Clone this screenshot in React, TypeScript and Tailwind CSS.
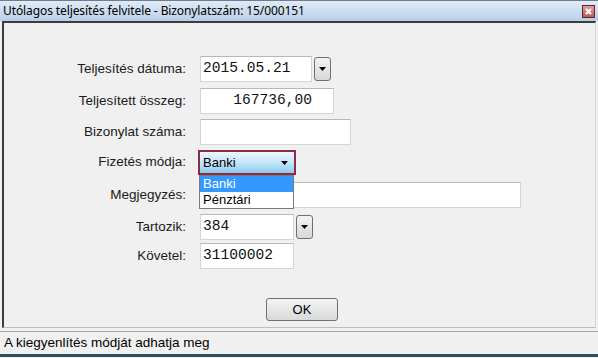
import React from 'react'

const sans = "font-['Liberation_Sans',Arial,sans-serif]"
const mono = "font-['Liberation_Mono','Courier_New',monospace]"

function Arrow() {
  return (
    <svg width="7" height="4" viewBox="0 0 7 4">
      <path d="M0 0h7L3.5 4z" fill="#000" />
    </svg>
  )
}

function DropButton() {
  return (
    <div className="ml-[2px] flex h-[24px] w-[17px] items-center justify-center rounded-[3px] border border-[#707070] bg-gradient-to-b from-[#f3f3f3] to-[#d8d8d8]">
      <Arrow />
    </div>
  )
}

function Field({ width, children, className = '' }: { width: string; children?: React.ReactNode; className?: string }) {
  return (
    <div
      className={`flex h-[26px] items-center border border-[#d5d5d5] border-t-[#b8b8b8] bg-white px-[2px] text-[14.6px] text-[#111] ${mono} ${width} ${className}`}
    >
      {children}
    </div>
  )
}

function Row({ label, top, children }: { label: string; top: string; children: React.ReactNode }) {
  return (
    <div className={`flex items-center ${top}`}>
      <div className={`w-[183px] pr-[1px] text-right text-[13.5px] text-[#1a1a1a] ${sans}`}>{label}</div>
      <div className="ml-[13px] flex items-center">{children}</div>
    </div>
  )
}

export default function App() {
  return (
    <div className="flex h-[358px] w-[598px] flex-col bg-[#f0f0f0]">
      {/* title bar */}
      <div className="flex h-[21px] shrink-0 items-center justify-between border-t border-[#6a7d92] bg-gradient-to-b from-[#e2ebf6] to-[#b8cfe8] pl-[3px] pr-[3px]">
        <span className="text-[12px] text-black font-['Noto_Sans',sans-serif] tracking-[-0.1px]">
          Utólagos teljesítés felvitele - Bizonylatszám: 15/000151
        </span>
        <div className="flex h-[13px] w-[13px] items-center justify-center border border-[#5a2a2a] bg-gradient-to-b from-[#e49c9c] to-[#c45a5a]">
          <svg width="7" height="7" viewBox="0 0 7 7">
            <path d="M1 1l5 5M6 1L1 6" stroke="#fff" strokeWidth="2" />
          </svg>
        </div>
      </div>

      {/* client panel */}
      <div className="mx-[2px] h-[307px] shrink-0 border border-[#3c3c3c] border-r-[#d6d6d6] border-b-[#bdbdbd] border-l-2 border-t-2">
        <div className="flex flex-col">
          <Row label="Teljesítés dátuma:" top="mt-[33px]">
            <Field width="w-[112px]" className="pl-[2px]">2015.05.21</Field>
            <DropButton />
          </Row>
          <Row label="Teljesített összeg:" top="mt-[6px]">
            <Field width="w-[134px]" className="justify-end pr-[21px] h-[25px]">167736,00</Field>
          </Row>
          <Row label="Bizonylat száma:" top="mt-[5px]">
            <Field width="w-[151px]" className="h-[25px]" />
          </Row>
          <Row label="Fizetés módja:" top="mt-[5px]">
            <div className="relative -ml-[2px]">
              <div className={`flex h-[25px] w-[98px] items-center justify-between border-2 border-[#8c2b45] bg-gradient-to-b from-[#eef8fe] via-[#c5e6f8] to-[#8ec9ee] pl-[3px] pr-[6px] text-[13px] text-black ${sans}`}>
                <span>Banki</span>
                <Arrow />
              </div>
              <div className={`absolute left-[1px] top-[25px] z-10 w-[95px] border border-[#7a7a7a] bg-white text-[13px] ${sans}`}>
                <div className="h-[16px] bg-[#3399ff] pl-[3px] leading-[16px] text-white">Banki</div>
                <div className="h-[16px] pl-[3px] leading-[16px] text-black">Pénztári</div>
              </div>
            </div>
          </Row>
          <Row label="Megjegyzés:" top="mt-[7px]">
            <Field width="w-[321px]" className="h-[25px]" />
          </Row>
          <Row label="Tartozik:" top="mt-[6px]">
            <Field width="w-[94px]" className="h-[25px]">384</Field>
            <DropButton />
          </Row>
          <Row label="Követel:" top="mt-[3px]">
            <Field width="w-[94px]">31100002</Field>
          </Row>
          <div className="ml-[262px] mt-[29px]">
            <div className={`flex h-[23px] w-[72px] items-center justify-center rounded-[3px] border border-[#707070] bg-gradient-to-b from-[#f4f4f4] to-[#d9d9d9] text-[13px] text-black ${sans}`}>
              OK
            </div>
          </div>
        </div>
      </div>

      {/* status bar */}
      <div className="mt-[3px] flex h-[26px] shrink-0 items-center border-t border-[#a8a8a8] border-b-[3px] border-b-[#2f4f5f] pl-[4px]">
        <span className={`text-[13.5px] text-black ${sans}`}>A kiegyenlítés módját adhatja meg</span>
      </div>
    </div>
  )
}
